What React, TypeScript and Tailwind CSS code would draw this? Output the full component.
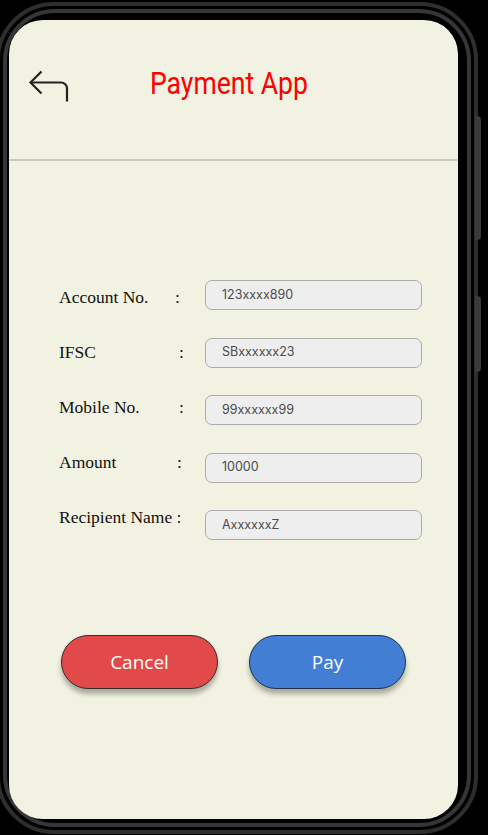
import { FC } from 'react';

type Field = {
  label: string;
  value: string;
  labelWidth: string;
  colon: boolean;
};

const fields: Field[] = [
  { label: 'Account No.', value: '123xxxx890', labelWidth: 'w-[116px]', colon: true },
  { label: 'IFSC', value: 'SBxxxxxx23', labelWidth: 'w-[120px]', colon: true },
  { label: 'Mobile No.', value: '99xxxxxx99', labelWidth: 'w-[120px]', colon: true },
  { label: 'Amount', value: '10000', labelWidth: 'w-[118px]', colon: true },
  { label: 'Recipient Name :', value: 'AxxxxxxZ', labelWidth: 'w-auto', colon: false },
];

const BackIcon: FC = () => (
  <svg width="42" height="33" viewBox="0 0 42 33" fill="none" stroke="#222" strokeWidth="2.2" strokeLinecap="butt" strokeLinejoin="miter">
    <path d="M13.5 2.5 L2.5 13.5 L13.5 24.5" />
    <path d="M2.5 13.5 H33 a6 6 0 0 1 6 6 V32.5" />
  </svg>
);

export default function App() {
  return (
    <div className="relative w-[488px] h-[835px] bg-black overflow-hidden">
      {/* side buttons */}
      <div className="absolute left-[475px] top-[116px] w-[6px] h-[124px] rounded-r-[4px] bg-[#3a3a3a]" />
      <div className="absolute left-[475px] top-[296px] w-[6px] h-[76px] rounded-r-[4px] bg-[#3a3a3a]" />

      {/* phone body */}
      <div className="-ml-1 mt-[2px] w-[482px] h-[832px] rounded-[58px] border-[4px] border-[#2e2e2e] bg-black p-[3px]">
        <div className="h-full rounded-[52px] border-[4px] border-[#363636] bg-black pt-[7px] pl-[2px] pr-[9px] pb-[4px]">
          <div className="h-full rounded-[34px] bg-[#f1f2e1] overflow-hidden">
            {/* header */}
            <div className="h-[141px] border-b-[2px] border-[#c9cabb] flex items-start pt-[49px] pl-[19px]">
              <BackIcon />
              <h1 className="ml-[80px] -mt-[6px] inline-block origin-left scale-x-[0.83] whitespace-nowrap text-[32px] leading-[40px] text-[#ff0000] font-['Roboto','Liberation_Sans',sans-serif]">
                Payment App
              </h1>
            </div>

            {/* form */}
            <div className="mt-[119px] flex pl-[50px]">
              <div className="w-[146px] flex flex-col gap-[35px] pt-[7px]">
                {fields.map((f) => (
                  <div key={f.label} className="flex h-[20px] leading-[20px] text-[17.5px] text-[#111] font-['Liberation_Serif','Times_New_Roman',serif]">
                    <span className={f.labelWidth}>{f.label}</span>
                    {f.colon && <span>:</span>}
                  </div>
                ))}
              </div>
              <div className="flex flex-col gap-[27.5px]">
                {fields.map((f) => (
                  <div
                    key={f.value}
                    className="w-[217px] h-[30px] rounded-[7px] border-[1.5px] border-[#ababab] bg-[#eeeeee] flex items-center pl-[16px] text-[12.5px] text-[#4a4a4a] font-['Inter','Liberation_Sans',sans-serif]"
                  >
                    {f.value}
                  </div>
                ))}
              </div>
            </div>

            {/* buttons */}
            <div className="mt-[95px] flex gap-[31px] pl-[52px]">
              <button className="w-[157px] h-[54px] rounded-full border border-[#3a2a2a] bg-[#e24a4a] text-white text-[19px] font-['Open_Sans','Noto_Sans',sans-serif] shadow-[0_5px_5px_rgba(0,0,0,0.3)]">
                Cancel
              </button>
              <button className="w-[157px] h-[54px] rounded-full border border-[#23324a] bg-[#427ed4] text-white text-[19px] font-['Open_Sans','Noto_Sans',sans-serif] shadow-[0_5px_5px_rgba(0,0,0,0.3)]">
                Pay
              </button>
            </div>
          </div>
        </div>
      </div>
    </div>
  );
}
